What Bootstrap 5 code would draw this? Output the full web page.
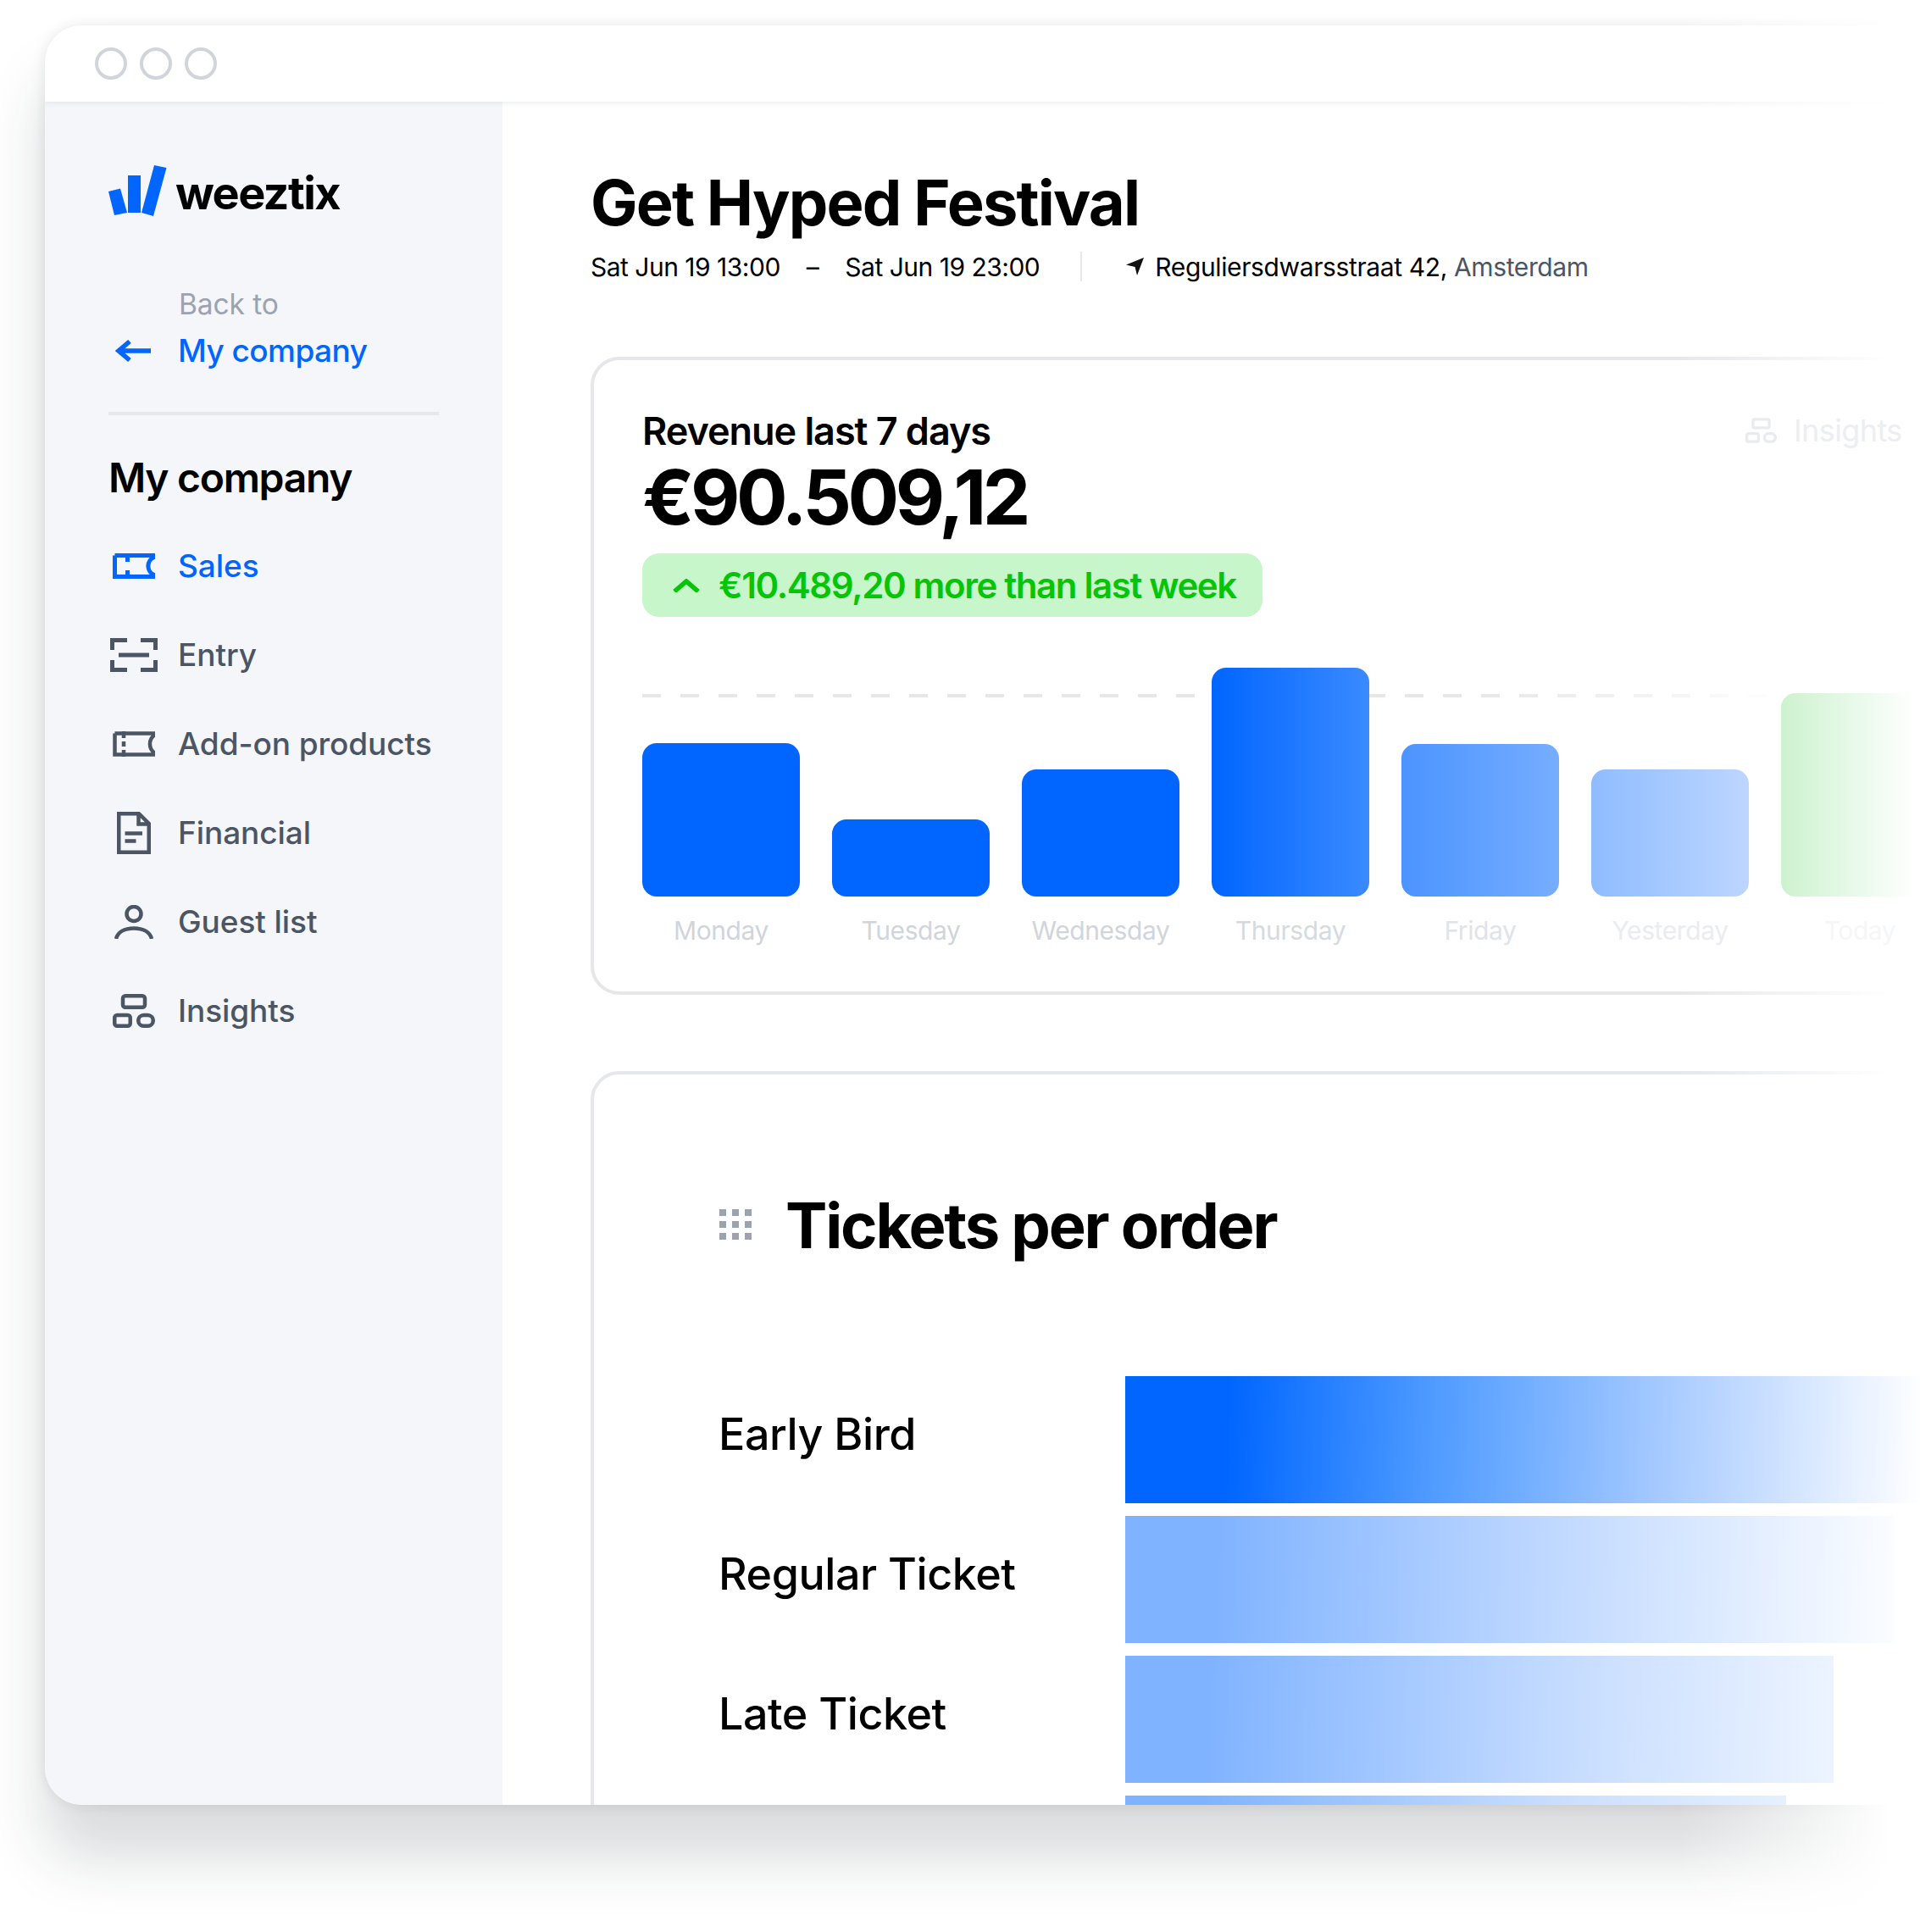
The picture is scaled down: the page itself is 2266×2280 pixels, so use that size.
<!DOCTYPE html>
<html lang="en">
<head>
<meta charset="utf-8">
<title>Weeztix dashboard</title>
<link href="https://cdn.jsdelivr.net/npm/bootstrap@5.3.0/dist/css/bootstrap.min.css" rel="stylesheet">
<style>
html,body{margin:0;width:2266px;height:2280px;overflow:hidden;background:#fff}
body{font-family:Inter,"Liberation Sans",sans-serif;color:#000}
.stage{width:2266px;height:2280px;padding:30px 0 0 53px;overflow:hidden;position:relative}
.appwin{width:2400px;height:2100px;background:#fff;border-radius:44px 0 0 44px;overflow:hidden;box-shadow:0 0 16px rgba(30,40,50,.10),0 62px 70px rgba(30,40,50,.17)}
.topbar{height:90px;flex:none;padding-left:59px;gap:15px;box-shadow:0 2px 6px rgba(30,40,50,.08);position:relative;z-index:2;background:#fff}
.dot{width:38px;height:38px;border:4px solid #d1d5db;border-radius:50%}
.winbody{min-height:0}
.sidebar{width:540px;flex:none;background:#f4f6fa;padding:75px 0 0 75px}
.logoword{font-size:54px;font-weight:750;letter-spacing:-1.6px;line-height:54px;margin-left:10px;margin-top:5px}
.backto{margin:78px 0 0 83px;font-size:33.5px;line-height:53px;color:#9ca3af;letter-spacing:-.1px}
.mine{color:#06f;font-size:37px;line-height:56px;letter-spacing:-.55px;font-weight:500}
.backrow{height:56px;gap:32px;padding-left:8px}
.sidesep{width:390px;height:4px;background:#e5e7eb;margin-top:44px}
.sidehead{font-size:48px;font-weight:600;letter-spacing:-1.3px;line-height:60px;margin-top:44px;margin-bottom:0}
.sidenav{margin-top:21px}
.navitem{height:105px;font-size:37px;letter-spacing:-.08px;color:#4b5563;font-weight:500}
.navitem.on{color:#06f}
.navico{width:82px;flex:none;display:flex;justify-content:center;padding-right:22px}
.mainpane{padding:79px 0 0 104px;width:1800px}
.pagetitle{font-size:74px;font-weight:650;letter-spacing:-1.85px;line-height:80px;margin:0}
.metaline{font-size:30px;letter-spacing:-.5px;line-height:40px;margin-top:15.5px;height:40px}
.datedash{margin:0 31px 0 31px}
.metasep{width:2px;height:35px;background:#e5e7eb;margin:0 52px 0 48px}
.locico{margin-right:13px}
.locaddr{letter-spacing:-.38px}
.graytxt{color:#4b5563}
.panel{width:1700px;border:4px solid #e5e7eb;border-radius:34px;background:#fff;position:relative}
.panelrev{height:753px;margin-top:86.5px;padding:59px 0 0 57px}
.revlabel{font-size:45px;font-weight:600;letter-spacing:-1.05px;line-height:50px}
.revamount{font-size:90px;font-weight:650;letter-spacing:-4.5px;line-height:96px;margin-top:5px}
.upbadge{display:inline-flex;align-items:center;height:75px;width:732px;padding-left:36px;gap:22px;border-radius:20px;background:#c6f6c9;color:#06c406;font-size:42px;font-weight:600;letter-spacing:-1.37px;margin-top:18px}
.insightsfaint{position:absolute;top:56px;left:1359px;gap:20px;font-size:36px;color:#eceef1;letter-spacing:-.6px;z-index:6}
.dashline{position:absolute;left:57px;top:394px;width:1400px;height:4px;background:linear-gradient(90deg,rgba(255,255,255,0) 70%,#fff 100%),repeating-linear-gradient(90deg,#e5e7eb 0 22px,transparent 22px 45px)}
.chart{position:absolute;left:57px;top:336px;height:400px;gap:38px;align-items:flex-start}
.chartcol{width:186px;flex:none;height:362px;display:flex;flex-direction:column;justify-content:flex-end;align-items:center;position:relative;z-index:6}
.chartbar{width:186px;border-radius:17px}
.chartlab{height:50px;line-height:50px;font-size:30px;letter-spacing:-.4px;margin-top:15px;white-space:nowrap}
.panelorder{margin-top:90px;height:1000px;padding:134px 0 0 0}
.orderhead{padding-left:148px;gap:40px;height:88px}
.ordertitle{font-size:74px;font-weight:650;letter-spacing:-2.2px;line-height:88px;margin:0}
.griddots{width:38px;display:grid;grid-template-columns:repeat(3,8px);gap:6px 7px;flex:none;margin-top:-3px}
.griddots i{width:8px;height:8px;background:#9ca3af;display:block}
.orderlist{margin-top:134px;gap:15px}
.orderrow{height:150px;align-items:center}
.orderlab{width:627px;padding-left:147px;font-size:52px;font-weight:500;letter-spacing:-.45px;flex:none;margin-top:-13px;white-space:nowrap}
.orderbar{height:150px;position:relative;z-index:6}
.b1{width:940px;background:linear-gradient(92deg,#06f 13%,#4d9aff 38%,#a8cbff 68%,#fff 100%)}
.b2{width:907px;background:linear-gradient(92deg,#80b3ff 12%,#c9deff 62%,#fbfdff 100%)}
.b3{width:836px;background:linear-gradient(92deg,#80b3ff 12%,#c9deff 65%,#edf4ff 100%)}
.b4{width:780px;background:linear-gradient(92deg,#80b3ff 12%,#c9deff 65%,#e6f0ff 100%)}
.sidefade{position:absolute;top:0;bottom:0;left:1980px;width:286px;background:linear-gradient(90deg,rgba(255,255,255,0),#fff 88%);z-index:5;pointer-events:none}
.day1,.day2,.day3{background:#06f}
.day4{background:linear-gradient(90deg,#06f,#3b8aff)}
.day5{background:linear-gradient(90deg,#4b94ff,#76adff)}
.day6{background:linear-gradient(90deg,#8fbcff,#bdd6ff)}
.day7{background:linear-gradient(90deg,#cdf2cf,#fff 85%)}
.lab1{color:#d1d5db}.lab2{color:#d1d5db}.lab3{color:#d1d5db}.lab4{color:#d6dae0}.lab5{color:#e0e3e8}.lab6{color:#eaecef}.lab7{color:#f5f6f8}
</style>
</head>
<body>
<div class="stage">
  <div class="appwin d-flex flex-column">
    <div class="topbar d-flex align-items-center">
      <span class="dot"></span><span class="dot"></span><span class="dot"></span>
    </div>
    <div class="d-flex flex-grow-1 winbody">
      <aside class="sidebar">
        <div class="d-flex align-items-center">
          <svg width="69" height="60" viewBox="0 0 69 60" fill="#06f"><polygon points="0,31 14,27.5 22,56 7,59"/><polygon points="23,12 38,12 38,56 23,56"/><polygon points="54,0 68.5,3 53,60 39,56"/></svg>
          <span class="logoword">weeztix</span>
        </div>
        <div class="backto">Back to</div>
        <div class="d-flex align-items-center backrow mine">
          <svg width="42" height="26" viewBox="0 0 42 26" fill="none" stroke="#06f" stroke-width="5.5"><path d="M42 13H4M17 2L4 13l13 11"/></svg>
          <span>My company</span>
        </div>
        <div class="sidesep"></div>
        <h2 class="sidehead">My company</h2>
        <nav class="d-flex flex-column sidenav">
          <a class="navitem on d-flex align-items-center text-decoration-none">
            <span class="navico"><svg width="50" height="30" viewBox="0 0 50 30" fill="none" stroke="#06f" stroke-width="5"><path d="M2.5 2.5H50M50 27.5H2.5V2.5M50 4A11.5 11.5 0 0 0 50 26M17.5 0V10M17.5 20V30"/></svg></span>
            <span>Sales</span>
          </a>
          <a class="navitem d-flex align-items-center text-decoration-none">
            <span class="navico"><svg width="56" height="40" viewBox="0 0 56 40" fill="none" stroke="#4b5563" stroke-width="5"><path d="M20 2.5H2.5V14M36 2.5H53.5V14M20 37.5H2.5V26M36 37.5H53.5V26M10 20H46"/></svg></span>
            <span>Entry</span>
          </a>
          <a class="navitem d-flex align-items-center text-decoration-none">
            <span class="navico"><svg width="50" height="30" viewBox="0 0 50 30" fill="none" stroke="#4b5563" stroke-width="5"><path d="M2.5 2.5H50M50 27.5H2.5V2.5M50 4A13 13 0 0 0 50 26M13 0V8M13 12V18M13 22V30" stroke-width="4.5"/></svg></span>
            <span>Add-on products</span>
          </a>
          <a class="navitem d-flex align-items-center text-decoration-none">
            <span class="navico"><svg width="40" height="50" viewBox="0 0 40 50" fill="none" stroke="#4b5563" stroke-width="4.5"><path d="M2.25 2.25H26L37.75 14V47.75H2.25ZM25.5 2.25V14.5H38M9.5 25.5H30M9.5 34.5H22.5"/></svg></span>
            <span>Financial</span>
          </a>
          <a class="navitem d-flex align-items-center text-decoration-none">
            <span class="navico"><svg width="46" height="40" viewBox="0 0 46 40" fill="none" stroke="#4b5563" stroke-width="4.5"><circle cx="23" cy="10.5" r="8.5"/><path d="M2 40C4 32 12 27.5 23 27.5S42 32 44 40"/></svg></span>
            <span>Guest list</span>
          </a>
          <a class="navitem d-flex align-items-center text-decoration-none">
            <span class="navico"><svg width="50" height="40" viewBox="0 0 50 40" fill="none" stroke="#4b5563" stroke-width="4.5"><rect x="12" y="2.25" width="26" height="13.5" rx="3"/><rect x="2.25" y="25" width="18.5" height="12.75" rx="3"/><rect x="30.25" y="25" width="17.5" height="12.75" rx="6.3"/></svg></span>
            <span>Insights</span>
          </a>
        </nav>
      </aside>
      <main class="mainpane">
        <h1 class="pagetitle">Get Hyped Festival</h1>
        <div class="metaline d-flex align-items-center">
          <span>Sat Jun 19 13:00</span>
          <span class="datedash">–</span>
          <span>Sat Jun 19 23:00</span>
          <span class="metasep"></span>
          <svg width="21" height="21" viewBox="0 0 21 21" fill="#111" class="locico"><path d="M21 0L13 21 10.5 11 0 8.5Z"/></svg>
          <span class="locaddr">Reguliersdwarsstraat 42, <span class="graytxt">Amsterdam</span></span>
        </div>
        <section class="panel panelrev">
          <div class="revlabel">Revenue last 7 days</div>
          <div class="revamount">€90.509,12</div>
          <div class="upbadge">
            <svg width="32" height="16" viewBox="0 0 32 16" fill="none" stroke="#06c406" stroke-width="5.5"><path d="M2 15L16 3l14 12"/></svg>
            <span>€10.489,20 more than last week</span>
          </div>
          <div class="insightsfaint d-flex align-items-center">
            <svg width="37" height="30" viewBox="0 0 50 40" fill="none" stroke="#e9ebee" stroke-width="4.5"><rect x="12" y="2.25" width="26" height="13.5" rx="3"/><rect x="2.25" y="25" width="18.5" height="12.75" rx="3"/><rect x="30.25" y="25" width="17.5" height="12.75" rx="6.3"/></svg>
            <span>Insights</span>
          </div>
          <div class="dashline"></div>
          <div class="chart d-flex">
            <div class="chartcol"><div class="chartbar day1" style="height:181px"></div><div class="chartlab lab1">Monday</div></div>
            <div class="chartcol"><div class="chartbar day2" style="height:91px"></div><div class="chartlab lab2">Tuesday</div></div>
            <div class="chartcol"><div class="chartbar day3" style="height:150px"></div><div class="chartlab lab3">Wednesday</div></div>
            <div class="chartcol"><div class="chartbar day4" style="height:270px"></div><div class="chartlab lab4">Thursday</div></div>
            <div class="chartcol"><div class="chartbar day5" style="height:180px"></div><div class="chartlab lab5">Friday</div></div>
            <div class="chartcol"><div class="chartbar day6" style="height:150px"></div><div class="chartlab lab6">Yesterday</div></div>
            <div class="chartcol"><div class="chartbar day7" style="height:240px"></div><div class="chartlab lab7">Today</div></div>
          </div>
        </section>
        <section class="panel panelorder">
          <div class="orderhead d-flex align-items-center">
            <div class="griddots"><i></i><i></i><i></i><i></i><i></i><i></i><i></i><i></i><i></i></div>
            <h2 class="ordertitle">Tickets per order</h2>
          </div>
          <div class="orderlist d-flex flex-column">
            <div class="orderrow d-flex"><div class="orderlab">Early Bird</div><div class="orderbar b1"></div></div>
            <div class="orderrow d-flex"><div class="orderlab">Regular Ticket</div><div class="orderbar b2"></div></div>
            <div class="orderrow d-flex"><div class="orderlab">Late Ticket</div><div class="orderbar b3"></div></div>
            <div class="orderrow d-flex"><div class="orderlab"></div><div class="orderbar b4"></div></div>
          </div>
        </section>
      </main>
    </div>
  </div>
  <div class="sidefade"></div>
</div>
<script src="https://cdn.jsdelivr.net/npm/bootstrap@5.3.0/dist/js/bootstrap.bundle.min.js"></script>
</body>
</html>
